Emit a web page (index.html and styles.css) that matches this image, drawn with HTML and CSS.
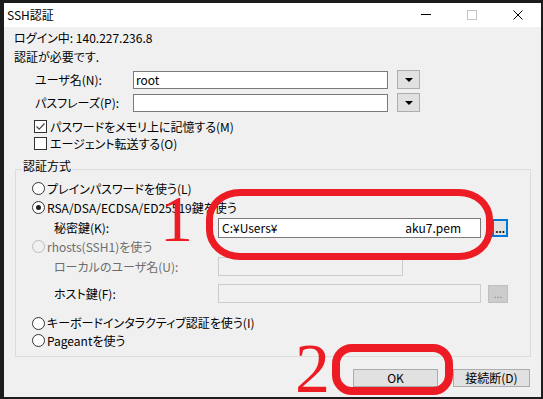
FILE: index.html
```html
<!DOCTYPE html>
<html>
<head>
    <meta charset="utf-8">
    <title>SSH認証</title>
    <link rel="stylesheet" href="styles.css">
</head>
<body>
    <div class="window">
        <div class="titlebar">
            <span class="title">SSH認証</span>
            <div class="caption">
                <span class="cap"><span class="cap-min"></span></span>
                <span class="cap"><span class="cap-max"></span></span>
                <span class="cap">
                    <svg class="cap-close" viewBox="0 0 10 10">
                        <path d="M0.5,0.5 L9.5,9.5 M9.5,0.5 L0.5,9.5"/>
                    </svg>
                </span>
            </div>
        </div>

        <div class="client">
            <div class="line">ログイン中: 140.227.236.8</div>
            <div class="line">認証が必要です.</div>

            <div class="field-row">
                <span class="field-label">ユーザ名(N):</span>
                <div class="textbox">root</div>
                <button class="drop"><span class="tri"></span></button>
            </div>
            <div class="field-row">
                <span class="field-label">パスフレーズ(P):</span>
                <div class="textbox"></div>
                <button class="drop"><span class="tri"></span></button>
            </div>

            <div class="check first">
                <span class="checkbox">
                    <svg viewBox="0 0 11 11"><path d="M1.5,5.5 L4.2,8.2 L9.5,2.5"/></svg>
                </span>
                <span>パスワードをメモリ上に記憶する(M)</span>
            </div>
            <div class="check">
                <span class="checkbox"></span>
                <span>エージェント転送する(O)</span>
            </div>

            <fieldset class="group">
                <legend>認証方式</legend>
                <div class="opt">
                    <span class="radio"></span>
                    <span>プレインパスワードを使う(L)</span>
                </div>
                <div class="opt">
                    <span class="radio checked"></span>
                    <span>RSA/DSA/ECDSA/ED25519鍵を使う</span>
                </div>
                <div class="sub key-row">
                    <span class="sub-label">秘密鍵(K):</span>
                    <div class="textbox wide key-path">
                        <span>C:¥Users¥</span>
                        <span class="file">aku7.pem</span>
                    </div>
                    <button class="browse focused">...</button>
                </div>
                <div class="opt rhosts disabled">
                    <span class="radio"></span>
                    <span>rhosts(SSH1)を使う</span>
                </div>
                <div class="sub local-row">
                    <span class="sub-label disabled">ローカルのユーザ名(U):</span>
                    <div class="textbox off short"></div>
                </div>
                <div class="sub host-row">
                    <span class="sub-label">ホスト鍵(F):</span>
                    <div class="textbox off wide"></div>
                    <button class="browse off">...</button>
                </div>
                <div class="opt kbd">
                    <span class="radio"></span>
                    <span>キーボードインタラクティブ認証を使う(I)</span>
                </div>
                <div class="opt pageant">
                    <span class="radio"></span>
                    <span>Pageantを使う</span>
                </div>
            </fieldset>

            <div class="actions">
                <button class="btn btn-ok">OK</button>
                <button class="btn btn-cancel">接続断(D)</button>
            </div>
        </div>
    </div>

    <!-- red annotations drawn over the dialog -->
    <div class="mark-ring ring-1"></div>
    <span class="mark-num num-1">1</span>
    <div class="mark-ring ring-2"></div>
    <span class="mark-num num-2">2</span>
</body>
</html>
```

FILE: styles.css
```css
* {
    box-sizing: border-box;
}

body {
    margin: 0;
    padding: 3px 2px 2px 4px;
    background: #1c1c1c;
    font-family: "Noto Sans CJK JP", "Liberation Sans", sans-serif;
    font-size: 12px;
    line-height: 16px;
    font-feature-settings: "palt" 1;
    color: #000;
}

button {
    font: inherit;
    color: inherit;
    padding: 0;
}

.window {
    width: 537px;
    height: 394px;
    background: #f0f0f0;
    display: flex;
    flex-direction: column;
}

/* title bar */
.titlebar {
    height: 24px;
    background: #fff;
    display: flex;
    align-items: center;
}

.title {
    flex: 1;
    padding-left: 3px;
}

.caption {
    display: flex;
    align-self: stretch;
}

.cap {
    width: 46px;
    display: flex;
    align-items: center;
    justify-content: center;
}

.cap-min {
    width: 10px;
    height: 1px;
    background: #000;
    margin-top: -1px;
}

.cap-max {
    width: 10px;
    height: 10px;
    border: 1px solid #c4c4c4;
}

.cap-close {
    width: 10px;
    height: 10px;
    stroke: #000;
    stroke-width: 1;
    fill: none;
}

/* client area */
.client {
    padding: 1px 11px 0 10px;
}

.line {
    line-height: 19px;
}

.field-row {
    display: flex;
    align-items: center;
    height: 19px;
    margin-top: 4px;
    padding-left: 21px;
}

.field-label {
    width: 98px;
}

.textbox {
    width: 255px;
    height: 18px;
    border: 1px solid #7a7a7a;
    background: #fff;
    padding-left: 2px;
    line-height: 16px;
}

.drop {
    margin-left: 9px;
    width: 23px;
    height: 19px;
    border: 1px solid #adadad;
    background: #e1e1e1;
    display: flex;
    align-items: center;
    justify-content: center;
}

.tri {
    width: 0;
    height: 0;
    border-left: 4px solid transparent;
    border-right: 4px solid transparent;
    border-top: 4px solid #000;
}

.check {
    display: flex;
    align-items: center;
    gap: 3px;
    height: 17px;
    padding-left: 20px;
}

.check.first {
    margin-top: 6px;
}

.checkbox {
    width: 13px;
    height: 13px;
    border: 1px solid #333;
    background: #fff;
    display: flex;
}

.checkbox svg {
    width: 11px;
    height: 11px;
    fill: none;
    stroke: #444;
    stroke-width: 1.2;
}

/* authentication group */
.group {
    margin: 7px 0 0 1px;
    width: 516px;
    min-inline-size: 0;
    border: 1px solid #dcdcdc;
    padding: 0 0 7px 0;
}

.group legend {
    margin-left: 6px;
    padding: 0 1px 6px;
    line-height: 14px;
}

.opt {
    display: flex;
    align-items: center;
    gap: 2px;
    height: 19px;
    padding-left: 16px;
}

.radio {
    width: 13px;
    height: 13px;
    border: 1px solid #333;
    border-radius: 50%;
    background: #fff;
    display: flex;
    align-items: center;
    justify-content: center;
}

.radio.checked::after {
    content: "";
    width: 5px;
    height: 5px;
    border-radius: 50%;
    background: #222;
}

.disabled {
    color: #6d6d6d;
}

.disabled .radio {
    border-color: #bcbcbc;
    background: #f0f0f0;
}

.sub {
    display: flex;
    align-items: center;
    padding-left: 38px;
}

.sub-label {
    width: 164px;
}

.key-row {
    height: 20px;
    margin-top: 1px;
}

.textbox.wide {
    width: 263px;
    height: 20px;
    line-height: 18px;
}

.key-path {
    display: flex;
    padding-left: 3px;
    padding-right: 19px;
}

.key-path .file {
    margin-left: auto;
}

.browse {
    width: 16px;
    height: 18px;
    margin-left: 11px;
    border: 2px solid #0078d7;
    background: #e1e1e1;
    font-size: 10px;
    line-height: 16px;
    font-weight: bold;
}

.browse.off {
    width: 20px;
    margin-left: 7px;
    border: 1px solid #bfbfbf;
    background: #cccccc;
    color: #838383;
    font-weight: normal;
}

.rhosts {
    height: 17px;
}

.local-row {
    height: 19px;
    margin-top: 2px;
}

.textbox.off {
    border-color: #cccccc;
    background: #f0f0f0;
}

.textbox.short {
    width: 185px;
    height: 19px;
}

.host-row {
    height: 19px;
    margin-top: 8px;
}

.host-row .textbox.wide {
    height: 19px;
}

.kbd {
    height: 18px;
    margin-top: 11px;
}

.pageant {
    height: 17px;
}

/* dialog buttons */
.actions {
    display: flex;
    justify-content: flex-end;
    gap: 15px;
    margin-top: 12px;
}

.btn {
    height: 18px;
    border: 1px solid #adadad;
    background: #e1e1e1;
    line-height: 16px;
}

.btn-ok {
    width: 85px;
}

.btn-cancel {
    width: 77px;
}

/* red paint marks */
.mark-ring {
    position: absolute;
    border: 7px solid #ed1c24;
}

.ring-1 {
    left: 206px;
    top: 189px;
    width: 287px;
    height: 71px;
    border-radius: 34px / 30px;
}

.ring-2 {
    left: 332px;
    top: 344px;
    width: 121px;
    height: 51px;
    border-width: 8px;
    border-radius: 20px;
}

.mark-num {
    position: absolute;
    font-family: "Liberation Serif", serif;
    color: #ed1c24;
    line-height: 1;
    font-feature-settings: normal;
}

.num-1 {
    left: 160px;
    top: 186px;
    font-size: 66px;
}

.num-2 {
    left: 295px;
    top: 334px;
    font-size: 70px;
}
```
